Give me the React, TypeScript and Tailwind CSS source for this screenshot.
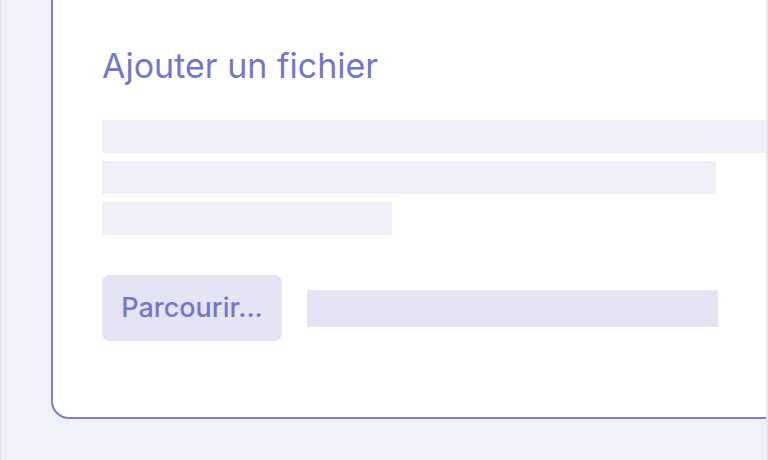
import React from "react";

const FileUploadCard: React.FC = () => {
  return (
    <div className="h-[460px] w-[768px] overflow-hidden bg-[#f1f1f9] border-l-2 border-r-2 border-[#e6e6f0] font-['Inter',sans-serif] [font-variant-ligatures:none]">
      <div className="ml-[49px] h-[419px] bg-white border-l-2 border-b-2 border-[#7b7bcf] rounded-bl-[18px] pl-[49px] pt-[46px]">
        {/* Title */}
        <h2 className="text-[34px] leading-[40px] text-[#7676c9]">Ajouter un fichier</h2>

        {/* Placeholder lines */}
        <div className="mt-[34px] flex flex-col gap-[8px]">
          <div className="h-[33px] w-[700px] bg-[#f0f0f9]" />
          <div className="h-[33px] w-[614px] bg-[#f0f0f9]" />
          <div className="h-[33px] w-[290px] bg-[#f0f0f9]" />
        </div>

        {/* Upload row */}
        <div className="mt-[40px] flex items-center gap-[25px]">
          <button className="h-[66px] w-[180px] rounded-[8px] bg-[#e4e4f4] text-[27px] font-medium text-[#7676c9]">
            Parcourir...
          </button>
          <div className="h-[37px] w-[411px] bg-[#e4e4f4]" />
        </div>
      </div>
    </div>
  );
};

export default function App() {
  return <FileUploadCard />;
}
